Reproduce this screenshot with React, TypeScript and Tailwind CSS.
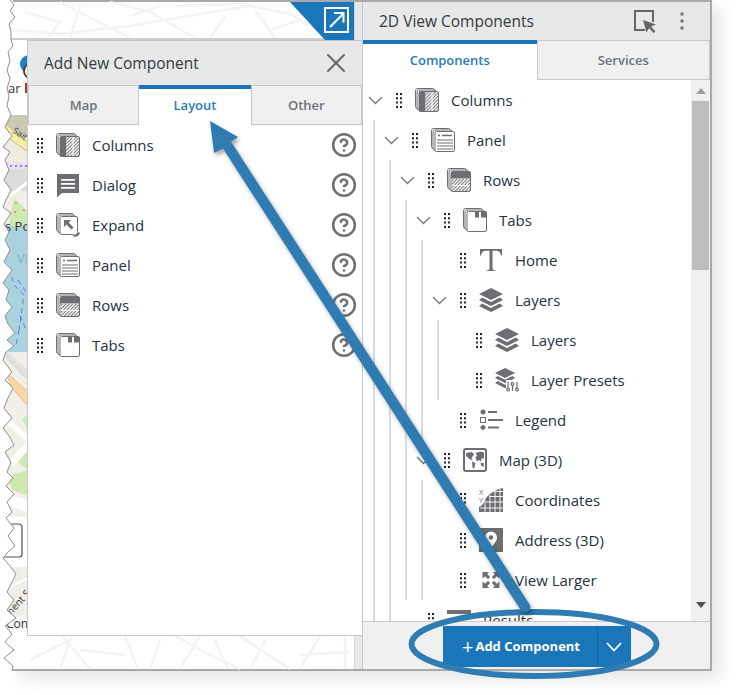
import React from 'react';
import { CircleHelp, X } from 'lucide-react';

const GRAY = '#6d6e71';

// torn left edge of the screenshot, page coordinates
const TORN = '10,0 14,5 10,11 15,17 9,24 11,31 11,40 13,46 8,52 10,61 7,70 10,79 7,88 9,96 7,106 11,115 5,127 12,136 3,147 10,152 5,160 9,170 4,180 11,190 6,200 3,207 11,213 4,224 9,232 5,240 10,250 4,262 12,270 3,283 9,290 6,300 12,307 5,316 8,324 15,333 7,340 14,346 6,352 3,360 12,372 5,380 13,388 8,398 4,408 12,418 3,428 9,436 14,445 5,452 11,462 7,472 13,478 6,486 14,494 7,502 12,512 6,518 14,528 8,536 15,546 8,552 3,558 10,566 16,574 11,584 7,592 14,600 7,610 16,618 5,626 12,634 5,642 14,650 4,658 13,666 12,671';

const FAINT_TOP = [
  '13,30 60,34 130,26 200,14 250,6',
  '60,2 95,20 130,38',
  '110,2 150,12 195,38',
  '175,6 240,4 290,14 330,38',
  '25,12 60,22 48,38',
  '80,6 70,38',
  '225,16 210,38',
  '255,10 275,38',
  '130,16 160,6',
  '300,20 270,30',
];

const FAINT_BOTTOM = [
  '30,660 70,640 60,669',
  '62,636 90,669',
  '125,636 138,669',
  '160,640 150,669 ',
  '175,636 210,655 240,669',
  '200,636 180,669',
  '240,636 290,669',
  '215,640 228,669',
  '265,640 250,669',
  '320,636 300,669',
  '300,655 350,652',
  '80,650 125,655',
  '345,636 345,669',
];

function MapBackdrop() {
  return (
    <svg className="block w-full h-full overflow-visible" viewBox="0 0 341 667" fill="none">
      <g transform="translate(-13 -2)">
        <g stroke="#f3f3f3" strokeWidth="2.5">
          {FAINT_TOP.map((p) => <polyline key={p} points={p} />)}
          {FAINT_BOTTOM.map((p) => <polyline key={p} points={p} />)}
        </g>
        <line x1="0" x2="354" y1="39" y2="39" stroke="#cfcfcf" strokeWidth="2" />
        <rect x="0" y="40" width="28" height="595" fill="#fff" />
        {/* logo scraps */}
        <circle cx="29" cy="64" r="9" fill="#1f7fc9" />
        <circle cx="32" cy="71" r="8" fill="#fff" stroke="#444" strokeWidth="2" />
        <text x="8" y="93" fontSize="13" fill="#333">ar</text>
        <rect x="25" y="83" width="3" height="10" fill="#a33" />
        {/* map strip */}
        <rect x="0" y="115" width="28" height="22" fill="#c9c9b6" />
        <rect x="0" y="137" width="28" height="25" fill="#f0ece4" />
        <polygon points="0,120 28,142 28,152 0,132" fill="#f4efa8" stroke="#c9c07a" />
        <text x="12" y="132" fontSize="9" fill="#444" transform="rotate(35 12 132)">Sait A</text>
        <rect x="0" y="162" width="28" height="7" fill="#e8dff0" />
        <line x1="0" x2="28" y1="166" y2="166" stroke="#2233cc" strokeDasharray="2 3" strokeWidth="1" />
        <rect x="0" y="169" width="28" height="22" fill="#dcdcdc" />
        <rect x="0" y="191" width="28" height="35" fill="#f2efe9" />
        <polyline points="10,196 28,182" stroke="#fff" strokeWidth="3" />
        <polygon points="14,198 28,212 28,228 8,228" fill="#cdebb0" />
        <circle cx="16" cy="203" r="1" fill="#e77" />
        <circle cx="24" cy="210" r="1" fill="#e77" />
        <circle cx="15" cy="212" r="1" fill="#e77" />
        <rect x="0" y="226" width="28" height="130" fill="#aad3df" />
        <polygon points="0,345 28,366 28,376 0,356" fill="#f2efe9" />
        <text x="5" y="231" fontSize="13" fill="#333">s Po</text>
        <text x="17" y="263" fontSize="13" fill="#7fb2cc">Vi</text>
        <g stroke="#6a78e6" strokeWidth="1" strokeDasharray="5 4">
          <polyline points="9,268 14,285 24,295 19,330" />
          <polyline points="18,280 26,292" />
          <polyline points="20,315 26,330" />
          <polyline points="19,330 16,345" />
        </g>
        <rect x="0" y="352" width="28" height="165" fill="#f2efe9" />
        <polygon points="0,352 28,376 28,370 8,352" fill="#e4e4e4" />
        <polyline points="5,355 27,378" stroke="#dcdcdc" strokeWidth="3" />
        <polygon points="6,372 28,392 28,406 12,388" fill="#fcd6a4" stroke="#d9a96c" strokeWidth="0.7" />
        <polygon points="0,410 28,436 28,443 0,418" fill="#fff" />
        <polygon points="22,420 28,414 28,430" fill="#cdebb0" />
        <polygon points="8,462 28,440 28,450 14,466" fill="#fff" />
        <polygon points="18,462 28,450 28,470" fill="#cdebb0" />
        <polygon points="8,476 28,470 28,496 12,490" fill="#cfe8ad" />
        <polygon points="0,492 28,500 28,512 0,504" fill="#fff" />
        <rect x="0" y="517" width="28" height="50" fill="#fff" />
        <rect x="-4" y="524" width="26" height="33" rx="3" fill="#fff" stroke="#555" strokeWidth="1.2" />
        <rect x="0" y="567" width="28" height="48" fill="#f0eee8" />
        <polyline points="5,590 28,578" stroke="#fff" strokeWidth="2" />
        <text x="9" y="618" fontSize="10" fill="#333" transform="rotate(-48 9 618)">ment S</text>
        <rect x="0" y="615" width="28" height="17" fill="#f6f6f6" />
        <text x="6" y="628" fontSize="12" fill="#333">Cont</text>
        {/* torn edge */}
        <polygon points={`-13,0 ${TORN} -13,671`} fill="#fff" />
        <polyline points={TORN} stroke="#8e8e8e" strokeWidth="1" />
      </g>
    </svg>
  );
}

function Hatch() {
  return (
    <defs>
      <pattern id="hatch" width="2.4" height="2.4" patternUnits="userSpaceOnUse" patternTransform="rotate(45)">
        <rect width="2.4" height="2.4" fill="#fff" stroke="none" />
        <rect width="1" height="2.4" fill={GRAY} stroke="none" />
      </pattern>
    </defs>
  );
}

function Stack({ children }: { children: React.ReactNode }) {
  return (
    <svg width="24" height="24" viewBox="0 0 24 24" fill="none" stroke={GRAY} strokeWidth="1">
      <Hatch />
      <rect x="0.5" y="0.5" width="19" height="20" rx="2" fill="#fff" />
      <rect x="2" y="2" width="19" height="20" rx="2" fill="#fff" />
      <rect x="4" y="3.5" width="19.5" height="20" rx="1.5" fill="#fff" />
      {children}
    </svg>
  );
}

const ColumnsIcon = () => (
  <Stack>
    <rect x="4" y="3.5" width="6.5" height="20" fill={GRAY} stroke="none" />
    <rect x="10.5" y="4" width="6" height="19" fill="url(#hatch)" stroke="none" />
    <rect x="17.5" y="4" width="5.5" height="19" fill="url(#hatch)" stroke="none" />
  </Stack>
);

const DialogIcon = () => (
  <svg width="24" height="24" viewBox="0 0 24 24">
    <path d="M1 1h22v19H6l-5 4.5z" fill={GRAY} />
    <path d="M5 6h14v1.8H5zM5 10h14v1.8H5zM5 14h14v1.8H5z" fill="#fff" />
  </svg>
);

const ExpandIcon = () => (
  <svg width="24" height="24" viewBox="0 0 24 24" fill="none" stroke={GRAY} strokeWidth="1">
    <rect x="0.5" y="0.5" width="17" height="18" rx="2" fill="#fff" />
    <rect x="2" y="2" width="17" height="18" rx="2" fill="#fff" />
    <rect x="4" y="3.5" width="17.5" height="18" rx="1.5" fill="#fff" />
    <path d="M8 7h7l-2.400 2.400 5 5-2.200 2.200-5-5L8 14z" fill={GRAY} stroke="none" />
    <path d="M24 19c0 3.500-2 5-6 5-1 0-1.500-1.500-.5-2.500 1 .5 3 .5 3.500-2.500z" fill={GRAY} stroke="#fff" strokeWidth="0.6" />
  </svg>
);

const PanelIcon = () => (
  <Stack>
    <path d="M7 7.500h2M11 7.500h10" stroke={GRAY} strokeWidth="1.600" />
    <path d="M6 12h16M6 15h16M6 18h16M6 21h16" stroke={GRAY} strokeWidth="1" />
  </Stack>
);

const RowsIcon = () => (
  <Stack>
    <path d="M4 5a1.500 1.500 0 0 1 1.500-1.500h16.500a1.500 1.500 0 0 1 1.500 1.500v5.500H4z" fill={GRAY} stroke="none" />
    <rect x="5" y="11" width="18" height="6" fill="url(#hatch)" stroke="none" />
    <rect x="5" y="18" width="18" height="5" fill="url(#hatch)" stroke="none" />
  </Stack>
);

const TabsIcon = () => (
  <Stack>
    <path d="M12 3.500h4v6h-4zM18 3.500h5.500v6H18z" fill={GRAY} stroke="none" />
  </Stack>
);

const TextIcon = () => (
  <svg width="24" height="24" viewBox="0 0 24 24">
    <path d="M1 1h22v6.500h-1c-.5-3-2-4.700-5-4.700h-3.500V20.500c0 1.200 1 1.700 3 1.800V23H7.500v-.7c2 -.1 3-.6 3-1.800V2.800H7C4 2.800 2.500 4.500 2 7.500H1z" fill={GRAY} />
  </svg>
);

const LayerShapes = () => (
  <>
    <path d="M12 0l12 6-12 6L0 6z" fill={GRAY} />
    <path d="M3.200 9.500L12 14l8.800-4.500L24 12l-12 6L0 12z" fill={GRAY} />
    <path d="M3.200 15.500L12 20l8.800-4.500L24 18l-12 6L0 18z" fill={GRAY} />
  </>
);

const LayersIcon = () => (
  <svg width="24" height="24" viewBox="0 0 24 24"><LayerShapes /></svg>
);

const PresetsIcon = () => (
  <svg width="24" height="24" viewBox="0 0 24 24">
    <g transform="scale(0.84)"><LayerShapes /></g>
    <rect x="11" y="12" width="13" height="12" fill="#fff" />
    <g stroke={GRAY} fill="#fff" strokeWidth="1.200">
      <path d="M13 14v9M17.500 14v9M22 14v9" />
      <circle cx="13" cy="21.500" r="1.400" />
      <circle cx="17.500" cy="16" r="1.400" />
      <circle cx="22" cy="21.500" r="1.400" />
    </g>
  </svg>
);

const LegendIcon = () => (
  <svg width="24" height="24" viewBox="0 0 24 24" fill={GRAY}>
    <circle cx="4" cy="4" r="2.500" />
    <rect x="9" y="3" width="9" height="2" />
    <rect x="1.500" y="9.500" width="5" height="5" fill="#fff" stroke={GRAY} />
    <rect x="9" y="11" width="15" height="2" />
    <path d="M4 16.500l3 3-3 3-3-3z" />
    <rect x="9" y="18.500" width="11" height="2" />
  </svg>
);

const MapIcon = () => (
  <svg width="24" height="24" viewBox="0 0 24 24">
    <rect x="1" y="1" width="22" height="22" rx="2" fill="#fff" stroke={GRAY} strokeWidth="2" />
    <path d="M3 5l6-1 2 2.500-2.500 3.500 1 2.500-3-1.500L3 8zM9 13.500l3.500 1.500-1.500 6-1.500-1.500zM12.500 5l5-1.500 3.500 1v6l-2.500 0-.5 3-2-1.500-2 1.500-1.500-4 1.500-2z" fill={GRAY} />
    <path d="M17.500 14.500l3.500 1-.5 3.500-2.500-1.500z" fill={GRAY} />
  </svg>
);

const CoordinatesIcon = () => (
  <svg width="24" height="24" viewBox="0 0 24 24">
    <path d="M7 10c4-5 11-9 17-10v24H0v-5c3-1 5-4 7-9z" fill={GRAY} />
    <path d="M6 24V12M11 24V7M16 24V3.500M21 24V1M1 20h23M7 14h17M10 8.500h14M15 3.500h9" stroke="#fff" strokeWidth="0.900" />
    <text x="0" y="6.500" fontSize="7.500" fill={GRAY}>X</text>
    <text x="0" y="14.500" fontSize="7.500" fill={GRAY}>Y</text>
  </svg>
);

const AddressIcon = () => (
  <svg width="24" height="24" viewBox="0 0 24 24">
    <rect width="24" height="24" fill={GRAY} />
    <path d="M12 3.500a6 6 0 0 1 6 6c0 4-4 7-6 11-2-4-6-7-6-11a6 6 0 0 1 6-6z" fill="#fff" />
    <circle cx="12" cy="9.500" r="2.200" fill={GRAY} />
  </svg>
);

const LargerIcon = () => (
  <svg width="24" height="24" viewBox="0 0 24 24" fill={GRAY}>
    <g transform="translate(12 12) scale(0.85) translate(-12 -12.500)">
      <path d="M2 3h8L7.500 5.500l3.500 3.500-2.500 2.500-3.500-3.500L2 11zM22 3v8l-3-3-3.500 3.500L13 9l3.500-3.500L14 3zM2 22v-8l3 3 3.500-3.500L11 16l-3.500 3.500L10 22zM22 22h-8l2.500-2.500L13 16l2.500-2.500 3.500 3.500 3-3z" />
    </g>
  </svg>
);

const ResultsIcon = () => (
  <svg width="24" height="24" viewBox="0 0 24 24" fill={GRAY}>
    <rect x="0" y="2" width="24" height="4" />
  </svg>
);

function DragHandle() {
  return (
    <svg width="6" height="15" viewBox="0 0 6 15" fill="#222" className="shrink-0">
      <path d="M0 0h2v2H0zM4 0h2v2H4zM0 4.300h2v2H0zM4 4.300h2v2H4zM0 8.600h2v2H0zM4 8.600h2v2H4zM0 13h2v2H0zM4 13h2v2H4z" />
    </svg>
  );
}

type Node = {
  label: string;
  icon: React.FC;
  children?: Node[];
};

const tree: Node = {
  label: 'Columns',
  icon: ColumnsIcon,
  children: [
    {
      label: 'Panel',
      icon: PanelIcon,
      children: [
        {
          label: 'Rows',
          icon: RowsIcon,
          children: [
            {
              label: 'Tabs',
              icon: TabsIcon,
              children: [
                { label: 'Home', icon: TextIcon },
                {
                  label: 'Layers',
                  icon: LayersIcon,
                  children: [
                    { label: 'Layers', icon: LayersIcon },
                    { label: 'Layer Presets', icon: PresetsIcon },
                  ],
                },
                { label: 'Legend', icon: LegendIcon },
              ],
            },
            {
              label: 'Map (3D)',
              icon: MapIcon,
              children: [
                { label: 'Coordinates', icon: CoordinatesIcon },
                { label: 'Address (3D)', icon: AddressIcon },
                { label: 'View Larger', icon: LargerIcon },
              ],
            },
          ],
        },
        { label: 'Results', icon: ResultsIcon },
      ],
    },
  ],
};

function TreeNode({ node }: { node: Node }) {
  const Icon = node.icon;
  return (
    <div>
      <div className="flex h-10 items-center whitespace-nowrap">
        <div className="flex w-6 shrink-0 justify-center">
          {node.children && (
            <svg width="15" height="9" viewBox="0 0 15 9" fill="none" stroke="#777" strokeWidth="1.400">
              <polyline points="1,1 7.500,7.500 14,1" />
            </svg>
          )}
        </div>
        <div className="ml-[9px] mr-[13px] flex items-center">
          <DragHandle />
        </div>
        <Icon />
        <span className="ml-3 text-[15px] text-[#26323e]">{node.label}</span>
      </div>
      {node.children && (
        <div className="ml-[10px] border-l-2 border-[#dcdcdc] pl-1">
          {node.children.map((c) => (
            <TreeNode key={c.label} node={c} />
          ))}
        </div>
      )}
    </div>
  );
}

function TabButton({ label, active }: { label: string; active?: boolean }) {
  return active ? (
    <div className="flex items-center justify-center border-t-4 border-[#1a76b9] bg-white pb-[2px] text-[13px] font-semibold text-[#2a7ab8]">
      {label}
    </div>
  ) : (
    <div className="flex items-center justify-center border border-[#c8c8c8] bg-[#f0f0f0] pt-[2px] text-[13px] font-semibold text-[#6b7278]">
      {label}
    </div>
  );
}

const dialogItems: { label: string; icon: React.FC }[] = [
  { label: 'Columns', icon: ColumnsIcon },
  { label: 'Dialog', icon: DialogIcon },
  { label: 'Expand', icon: ExpandIcon },
  { label: 'Panel', icon: PanelIcon },
  { label: 'Rows', icon: RowsIcon },
  { label: 'Tabs', icon: TabsIcon },
];

function AddDialog() {
  return (
    <div className="absolute left-[27px] top-[40px] flex h-[596px] w-[336px] flex-col border border-[#c8c8c8] bg-white">
      <div className="flex h-[44px] shrink-0 items-center justify-between bg-[#e8e8e8] pl-4 pr-[10px]">
        <span className="pt-[2px] text-[15.5px] font-medium text-[#333a40]">Add New Component</span>
        <X size={32} strokeWidth={1.400} color="#666" />
      </div>
      <div className="grid h-10 shrink-0 grid-cols-3">
        <TabButton label="Map" />
        <TabButton label="Layout" active />
        <TabButton label="Other" />
      </div>
      <div className="flex flex-col">
        {dialogItems.map(({ label, icon: Icon }) => (
          <div key={label} className="flex h-10 items-center pl-[9px] pr-[5px]">
            <DragHandle />
            <div className="ml-[13px]"><Icon /></div>
            <span className="ml-3 flex-1 text-[15px] text-[#26323e]">{label}</span>
            <CircleHelp size={26} strokeWidth={2.300} color="#707070" />
          </div>
        ))}
      </div>
    </div>
  );
}

function ScrollBar() {
  return (
    <div className="flex w-[19px] shrink-0 flex-col items-center bg-[#f0f0f0]">
      <div className="flex h-[21px] w-full shrink-0 items-center justify-center">
        <svg width="10" height="6" viewBox="0 0 10 6"><path d="M5 0l5 6H0z" fill="#a0a0a0" /></svg>
      </div>
      <div className="h-[169px] w-[17px] shrink-0 bg-[#bebebe]" />
      <div className="flex-1" />
      <div className="flex h-[24px] w-full shrink-0 items-start justify-center pt-[5px]">
        <svg width="10" height="6" viewBox="0 0 10 6"><path d="M0 0h10L5 6z" fill="#505050" /></svg>
      </div>
    </div>
  );
}

function ComponentsPanel() {
  return (
    <div className="flex w-[348px] shrink-0 flex-col border-l border-[#c8c8c8] bg-white">
      <div className="flex h-[38px] shrink-0 items-center bg-[#e8e8e8] pl-4 pr-[26px]">
        <span className="flex-1 pt-[2px] text-[15.5px] font-medium text-[#333a40]">2D View Components</span>
        <svg width="24" height="24" viewBox="0 0 24 24" fill="none" className="mr-[23px]">
          <path d="M20 13V2H2v19h10" stroke="#666" strokeWidth="2" />
          <path d="M10 11l13 4.500-5 2 4.500 5-2 1.500-4.500-5-2.500 4.500z" fill="#666" />
        </svg>
        <svg width="4" height="18" viewBox="0 0 4 18" fill="#777">
          <circle cx="2" cy="2" r="1.800" />
          <circle cx="2" cy="9" r="1.800" />
          <circle cx="2" cy="16" r="1.800" />
        </svg>
      </div>
      <div className="grid h-10 shrink-0 grid-cols-2">
        <TabButton label="Components" active />
        <TabButton label="Services" />
      </div>
      <div className="flex min-h-0 flex-1">
        <div className="min-w-0 flex-1 overflow-hidden">
          <TreeNode node={tree} />
        </div>
        <ScrollBar />
      </div>
      <div className="flex h-[48px] shrink-0 justify-center border-t border-[#c8c8c8] bg-[#f0f0f0] pt-1">
        <div className="flex h-[41px] bg-[#1a76b9] text-white">
          <div className="flex w-[154px] items-center justify-center pl-[3px] text-[13px] font-bold">
            <span className="mr-[2px] text-[20px] font-normal leading-none">+</span>
            Add Component
          </div>
          <div className="flex w-[34px] items-center justify-center border-l border-[#15639c]">
            <svg width="16" height="10" viewBox="0 0 16 10" fill="none" stroke="#fff" strokeWidth="1.800">
              <polyline points="1,1 8,8.500 15,1" />
            </svg>
          </div>
        </div>
      </div>
    </div>
  );
}

function Callouts() {
  return (
    <svg className="pointer-events-none absolute inset-0" width="736" height="695" viewBox="0 0 736 695" fill="none">
      <ellipse cx="534" cy="644" rx="122.500" ry="32" stroke="#2e7cb2" strokeWidth="6" />
      <g className="drop-shadow-[2px_3px_2px_rgba(0,0,0,0.35)]">
        <path d="M227 145L525 607" stroke="#2e7cb2" strokeWidth="10.500" strokeLinecap="round" />
        <path d="M210 121L238 137 229 143 224 148 214 153z" fill="#2e7cb2" />
      </g>
    </svg>
  );
}

export default function App() {
  return (
    <div className="relative h-[695px] w-[736px] overflow-hidden bg-white font-['Open_Sans',sans-serif]">
      <div className="ml-[13px] flex h-[671px] w-[699px] border-y-2 border-r-2 border-[#a9a9a9] shadow-[8px_8px_16px_rgba(0,0,0,0.1)]">
        <div className="relative w-[341px] shrink-0 bg-white">
          <MapBackdrop />
          <svg className="absolute right-0 top-0" width="64" height="38" viewBox="0 0 64 38">
            <polygon points="0,0 64,0 64,38 35,38" fill="#1a76b9" />
            <rect x="35" y="6" width="23" height="24" fill="none" stroke="#fff" strokeWidth="2" />
            <path d="M40 25L53 12M44 11h9.500v9.500" fill="none" stroke="#fff" strokeWidth="2" />
          </svg>
        </div>
        <div className="w-[8px] shrink-0 border-l border-[#d6d6d6] bg-[#e8e8e8]" />
        <ComponentsPanel />
      </div>
      <AddDialog />
      <Callouts />
    </div>
  );
}
